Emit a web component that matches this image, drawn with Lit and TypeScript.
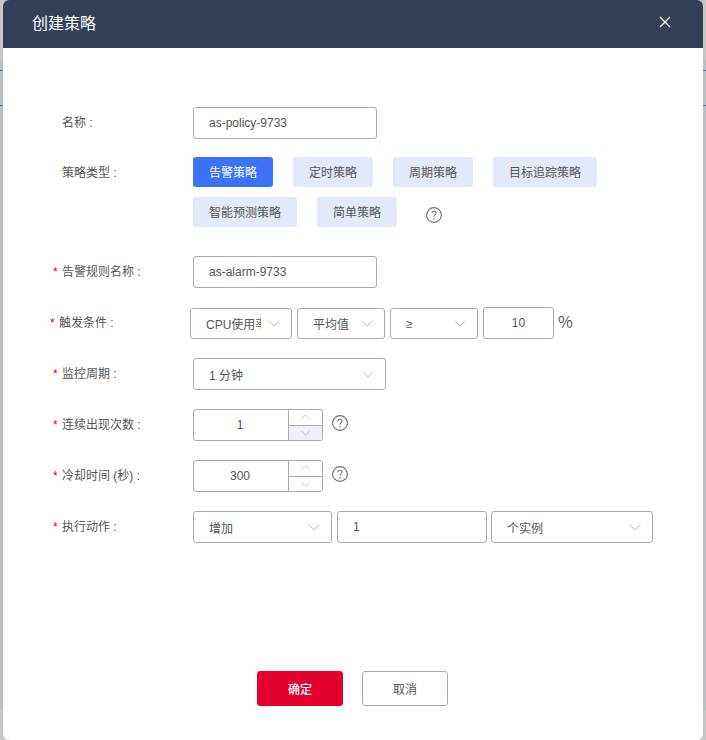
import { LitElement, html, css, svg } from "lit";
import { customElement } from "lit/decorators.js";

const chevron = (dir: "down" | "up" = "down") => html`<svg class="chev" width="12" height="7" viewBox="0 0 12 7" fill="none" stroke="currentColor" stroke-width="1">${svg`<path d=${dir === "down" ? "M.7.8 6 6 11.3.8" : "M.7 6.2 6 1l5.3 5.2"} />`}</svg>`;

const help = html`<svg class="help" width="16" height="16" viewBox="0 0 16 16" fill="none">${svg`<circle cx="8" cy="8" r="7.4" stroke="#6f6f6f" stroke-width="1.1"/><path d="M5.9 6.2c0-1.2.9-2 2.1-2s2.1.8 2.1 1.9c0 1.7-2.1 1.8-2.1 3.6" stroke="#6f6f6f" stroke-width="1.1"/><circle cx="8" cy="11.7" r=".8" fill="#6f6f6f"/>`}</svg>`;

@customElement("app-root")
export class AppRoot extends LitElement {
  static styles = css`
    :host { display: block; width: 706px; height: 740px; position: relative; overflow: hidden; background: #c6c6c6;
      font-family: "Liberation Sans", "Noto Sans CJK SC", sans-serif; font-size: 12px; color: #555; }
    .band { position: absolute; left: 0; right: 0; top: 60px; height: 650px; background: #bcc0c4; }
    .line { position: absolute; left: 0; right: 0; height: 1px; background: #3f6fd8; }
    .l1 { top: 70px; } .l2 { top: 105px; }
    .modal { position: absolute; left: 3px; top: 0; width: 700px; height: 740px; background: #fff; border-radius: 6px; overflow: hidden; }
    .head { height: 48px; background: #353f58; color: #fff; display: flex; align-items: center; justify-content: space-between; padding: 0 32px 0 29px; }
    .title { font-size: 16px; line-height: 48px; }
    .close { margin-top: -4px; display: block; }
    .form { padding: 59px 0 0 50px; display: flex; flex-direction: column; }
    .row { display: flex; align-items: flex-start; min-height: 32px; }
    .row.gap29 { margin-top: 29px; }
    .row.gap18 { margin-top: 18px; }
    .row.gap19 { margin-top: 19px; }
    .row.shift { margin-left: -3px; margin-top: 19px; }
    .label { width: 140px; flex: none; line-height: 33px; box-sizing: border-box; white-space: pre; }
    .label.tall { line-height: 32px; }
    .star { display: inline-block; width: 9px; color: #e3002c; }
    .ctl { display: flex; align-items: flex-start; }
    .box { height: 32px; box-sizing: border-box; border: 1px solid #a9aab5; border-radius: 3px; display: flex; align-items: center; justify-content: space-between; padding: 0 11px 0 15px; background: #fff; flex: none; white-space: nowrap; }
    .chev { color: #bdbdc4; flex: none; display: block; }
    .w184 { width: 184px; }
    .types { display: flex; flex-wrap: wrap; gap: 10px 20px; width: 430px; align-items: center; }
    .type { height: 30px; line-height: 33px; padding: 0 16px; box-sizing: border-box; border-radius: 3px; background: #e3e9fa; }
    .type.on { background: #3c72f5; color: #fff; }
    .help { display: block; flex: none; }
    .typehelp { margin: 6px 0 0 9px; }
    .sel31 { height: 31px; margin-top: 1px; }
    .clip { width: 55px; overflow: hidden; display: block; }
    .ml5 { margin-left: 5px; }
    .center { justify-content: center; padding: 0; }
    .pct { font-family: "Noto Sans CJK SC", sans-serif; font-size: 16px; margin-left: 4px; line-height: 28px; color: #555; }
    .w102 { width: 102px; } .w88 { width: 88px; } .w71 { width: 71px; }
    .w193 { width: 193px; }
    .stepper { width: 130px; padding: 0; align-items: stretch; overflow: hidden; }
    .num { flex: 1; display: flex; align-items: center; justify-content: center; padding-right: 2px; }
    .steps { width: 33px; flex: none; border-left: 1px solid #a9aab5; display: flex; flex-direction: column; }
    .step { flex: 1; display: flex; align-items: center; justify-content: center; }
    .step + .step { border-top: 1px solid #a9aab5; }
    .step.off { background: #eef0f6; }
    .step .chev { width: 11px; height: 6px; }
    .stephelp { margin: 6px 0 0 9px; }
    .w139 { width: 139px; } .w150 { width: 150px; } .w162 { width: 162px; }
    .ml4 { margin-left: 4px; }
    .foot { position: absolute; left: 254px; top: 671px; display: flex; gap: 19px; }
    .btn { width: 86px; height: 35px; box-sizing: border-box; border-radius: 3px; display: flex; align-items: center; justify-content: center; border: 1px solid #a9aab5; }
    .btn.primary { background: #e3002c; border-color: #e3002c; color: #fff; font-weight: 500; }
  `;

  private label(text: string, required = false, tall = true) {
    return html`<div class="label ${tall ? "tall" : ""}"><span class="star">${required ? "*" : ""}</span>${text}</div>`;
  }

  private stepper(value: string, lowOff: boolean) {
    return html`<div class="box stepper">
      <div class="num">${value}</div>
      <div class="steps">
        <div class="step">${chevron("up")}</div>
        <div class="step ${lowOff ? "off" : ""}">${chevron("down")}</div>
      </div>
    </div>`;
  }

  render() {
    return html`
      <div class="band"></div>
      <div class="line l1"></div>
      <div class="line l2"></div>
      <div class="modal">
        <div class="head">
          <div class="title">创建策略</div>
          <svg class="close" width="12" height="12" viewBox="0 0 12 12" stroke="#fff" stroke-width="1.3" fill="none">${svg`<path d="M1 1l10 10M11 1 1 11"/>`}</svg>
        </div>
        <div class="form">
          <div class="row">${this.label("名称 :")}<div class="box w184">as-policy-9733</div></div>
          <div class="row gap18">
            ${this.label("策略类型 :", false, false)}
            <div class="types">
              <div class="type on">告警策略</div>
              <div class="type">定时策略</div>
              <div class="type">周期策略</div>
              <div class="type">目标追踪策略</div>
              <div class="type">智能预测策略</div>
              <div class="type">简单策略</div>
              <div class="typehelp">${help}</div>
            </div>
          </div>
          <div class="row gap29">${this.label("告警规则名称 :", true)}<div class="box w184">as-alarm-9733</div></div>
          <div class="row shift">
            ${this.label("触发条件 :", true)}
            <div class="ctl">
              <div class="box sel31 w102"><span class="clip">CPU使用率</span>${chevron()}</div>
              <div class="box sel31 w88 ml5">平均值${chevron()}</div>
              <div class="box sel31 w88 ml5">≥${chevron()}</div>
              <div class="box w71 ml5 center">10</div>
              <span class="pct">%</span>
            </div>
          </div>
          <div class="row gap19">${this.label("监控周期 :", true)}<div class="box w193">1 分钟${chevron()}</div></div>
          <div class="row gap19">
            ${this.label("连续出现次数 :", true)}
            <div class="ctl">${this.stepper("1", true)}<div class="stephelp">${help}</div></div>
          </div>
          <div class="row gap19">
            ${this.label("冷却时间 (秒) :", true)}
            <div class="ctl">${this.stepper("300", false)}<div class="stephelp">${help}</div></div>
          </div>
          <div class="row gap19">
            ${this.label("执行动作 :", true)}
            <div class="ctl">
              <div class="box w139">增加${chevron()}</div>
              <div class="box w150 ml5">1</div>
              <div class="box w162 ml4">个实例${chevron()}</div>
            </div>
          </div>
        </div>
        <div class="foot">
          <div class="btn primary">确定</div>
          <div class="btn">取消</div>
        </div>
      </div>
    `;
  }
}
